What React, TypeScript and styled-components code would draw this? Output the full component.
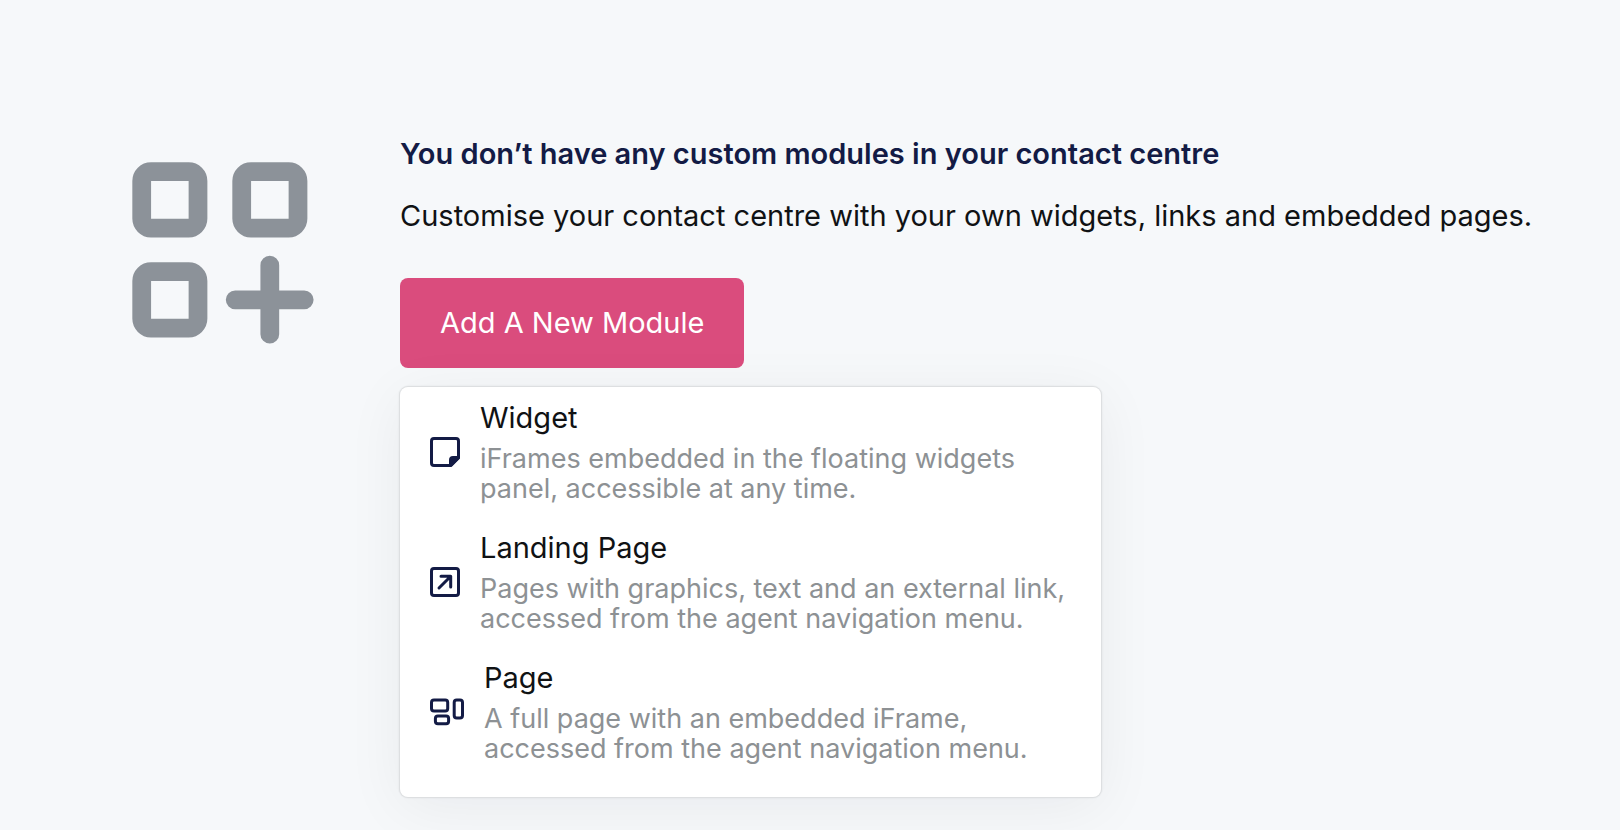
import React from 'react';
import styled, { createGlobalStyle } from 'styled-components';

const GlobalStyle = createGlobalStyle`
  *, *::before, *::after { box-sizing: border-box; }
  body {
    margin: 0;
    background: #f6f8fa;
    color: #101214;
    font-family: Inter, "Liberation Sans", sans-serif;
  }
`;

const EmptyState = styled.main`
  display: flex;
  align-items: flex-start;
  gap: 86px;
  min-height: 100vh;
  padding: 134px 32px 24px 132px;
`;

const ModulesIcon = styled.svg`
  flex: none;
  width: 182px;
  height: 182px;
  margin-top: 28px;
  fill: none;
  stroke: #8c9299;
  stroke-width: 18.75;
  stroke-linecap: round;
`;

const Content = styled.section`
  flex: 1;
  min-width: 0;
`;

const Heading = styled.h1`
  margin: 0 0 22px;
  color: #131b45;
  font-size: 29px;
  font-weight: 600;
  line-height: 40px;
`;

const Intro = styled.p`
  margin: 0 0 42px;
  font-size: 29px;
  line-height: 40px;
`;

const AddButton = styled.button`
  display: block;
  height: 90px;
  padding: 0 40px 2px;
  border: 0;
  border-radius: 8px;
  background: #da4c7d;
  color: #fff;
  font: inherit;
  font-size: 29px;
  cursor: pointer;
`;

const Menu = styled.ul`
  width: 100%;
  max-width: 701px;
  margin: 19px 0 0;
  padding: 0 0 20px;
  list-style: none;
  background: #fff;
  border-radius: 8px;
  box-shadow:
    0 0 0 1px #dddfe1,
    0 0 2px 1px rgba(20, 24, 40, 0.08),
    0 10px 60px rgba(20, 24, 40, 0.06);
`;

const MenuItem = styled.button`
  display: flex;
  align-items: center;
  gap: 20px;
  width: 100%;
  height: 130px;
  padding: 0 30px;
  border: 0;
  background: none;
  color: inherit;
  font: inherit;
  text-align: left;
  cursor: pointer;
`;

const ItemIcon = styled.svg`
  flex: none;
  height: 30px;
  fill: none;
  stroke: #131b45;
  stroke-width: 3;
  stroke-linecap: round;
  stroke-linejoin: round;
`;

const ItemText = styled.span`
  display: block;
  padding-bottom: 2px;
`;

const ItemTitle = styled.span`
  display: block;
  margin-bottom: 6px;
  font-size: 29px;
  line-height: 40px;
`;

const ItemDescription = styled.span`
  display: block;
  color: #8d9194;
  font-size: 27px;
  line-height: 30px;
`;

const WidgetIcon = () => (
  <ItemIcon width="30" viewBox="0 0 30 30" aria-hidden="true">
    <path d="M4 1.5H26Q28.5 1.5 28.5 4V21L21 28.5H4Q1.5 28.5 1.5 26V4Q1.5 1.5 4 1.5Z" />
    <path d="M28.5 20.5H23Q20.5 20.5 20.5 23V28.5Z" fill="#131b45" />
  </ItemIcon>
);

const LandingPageIcon = () => (
  <ItemIcon width="30" viewBox="0 0 30 30" aria-hidden="true">
    <rect x="1.5" y="1.5" width="27" height="27" rx="2.5" />
    <path d="M9 21L20.5 9.5M11 9.3H20.7V20" />
  </ItemIcon>
);

const PageIcon = () => (
  <ItemIcon width="34" viewBox="0 0 34 30" aria-hidden="true">
    <rect x="1.5" y="3" width="16.2" height="11" rx="2.5" />
    <rect x="5.4" y="19" width="13.2" height="7.8" rx="2.5" />
    <rect x="24.2" y="3" width="8.3" height="18" rx="2.5" />
  </ItemIcon>
);

const moduleTypes = [
  {
    title: 'Widget',
    lines: ['iFrames embedded in the floating widgets', 'panel, accessible at any time.'],
    Icon: WidgetIcon,
  },
  {
    title: 'Landing Page',
    lines: ['Pages with graphics, text and an external link,', 'accessed from the agent navigation menu.'],
    Icon: LandingPageIcon,
  },
  {
    title: 'Page',
    lines: ['A full page with an embedded iFrame,', 'accessed from the agent navigation menu.'],
    Icon: PageIcon,
  },
];

export default function App() {
  return (
    <>
      <GlobalStyle />
      <EmptyState>
        <ModulesIcon viewBox="0 0 182 182" aria-hidden="true">
          <rect x="9.7" y="9.7" width="56.3" height="56.3" rx="9.4" />
          <rect x="109.7" y="9.7" width="56.3" height="56.3" rx="9.4" />
          <rect x="9.7" y="109.7" width="56.3" height="56.3" rx="9.4" />
          <path d="M137.8 103.2V172.2M103.2 137.8H172.2" />
        </ModulesIcon>
        <Content>
          <Heading>You don’t have any custom modules in your contact centre</Heading>
          <Intro>Customise your contact centre with your own widgets, links and embedded pages.</Intro>
          <AddButton type="button" aria-expanded="true">Add A New Module</AddButton>
          <Menu>
            {moduleTypes.map(({ title, lines, Icon }) => (
              <li key={title}>
                <MenuItem type="button">
                  <Icon />
                  <ItemText>
                    <ItemTitle>{title}</ItemTitle>
                    {lines.map((line) => (
                      <ItemDescription key={line}>{line}</ItemDescription>
                    ))}
                  </ItemText>
                </MenuItem>
              </li>
            ))}
          </Menu>
        </Content>
      </EmptyState>
    </>
  );
}
